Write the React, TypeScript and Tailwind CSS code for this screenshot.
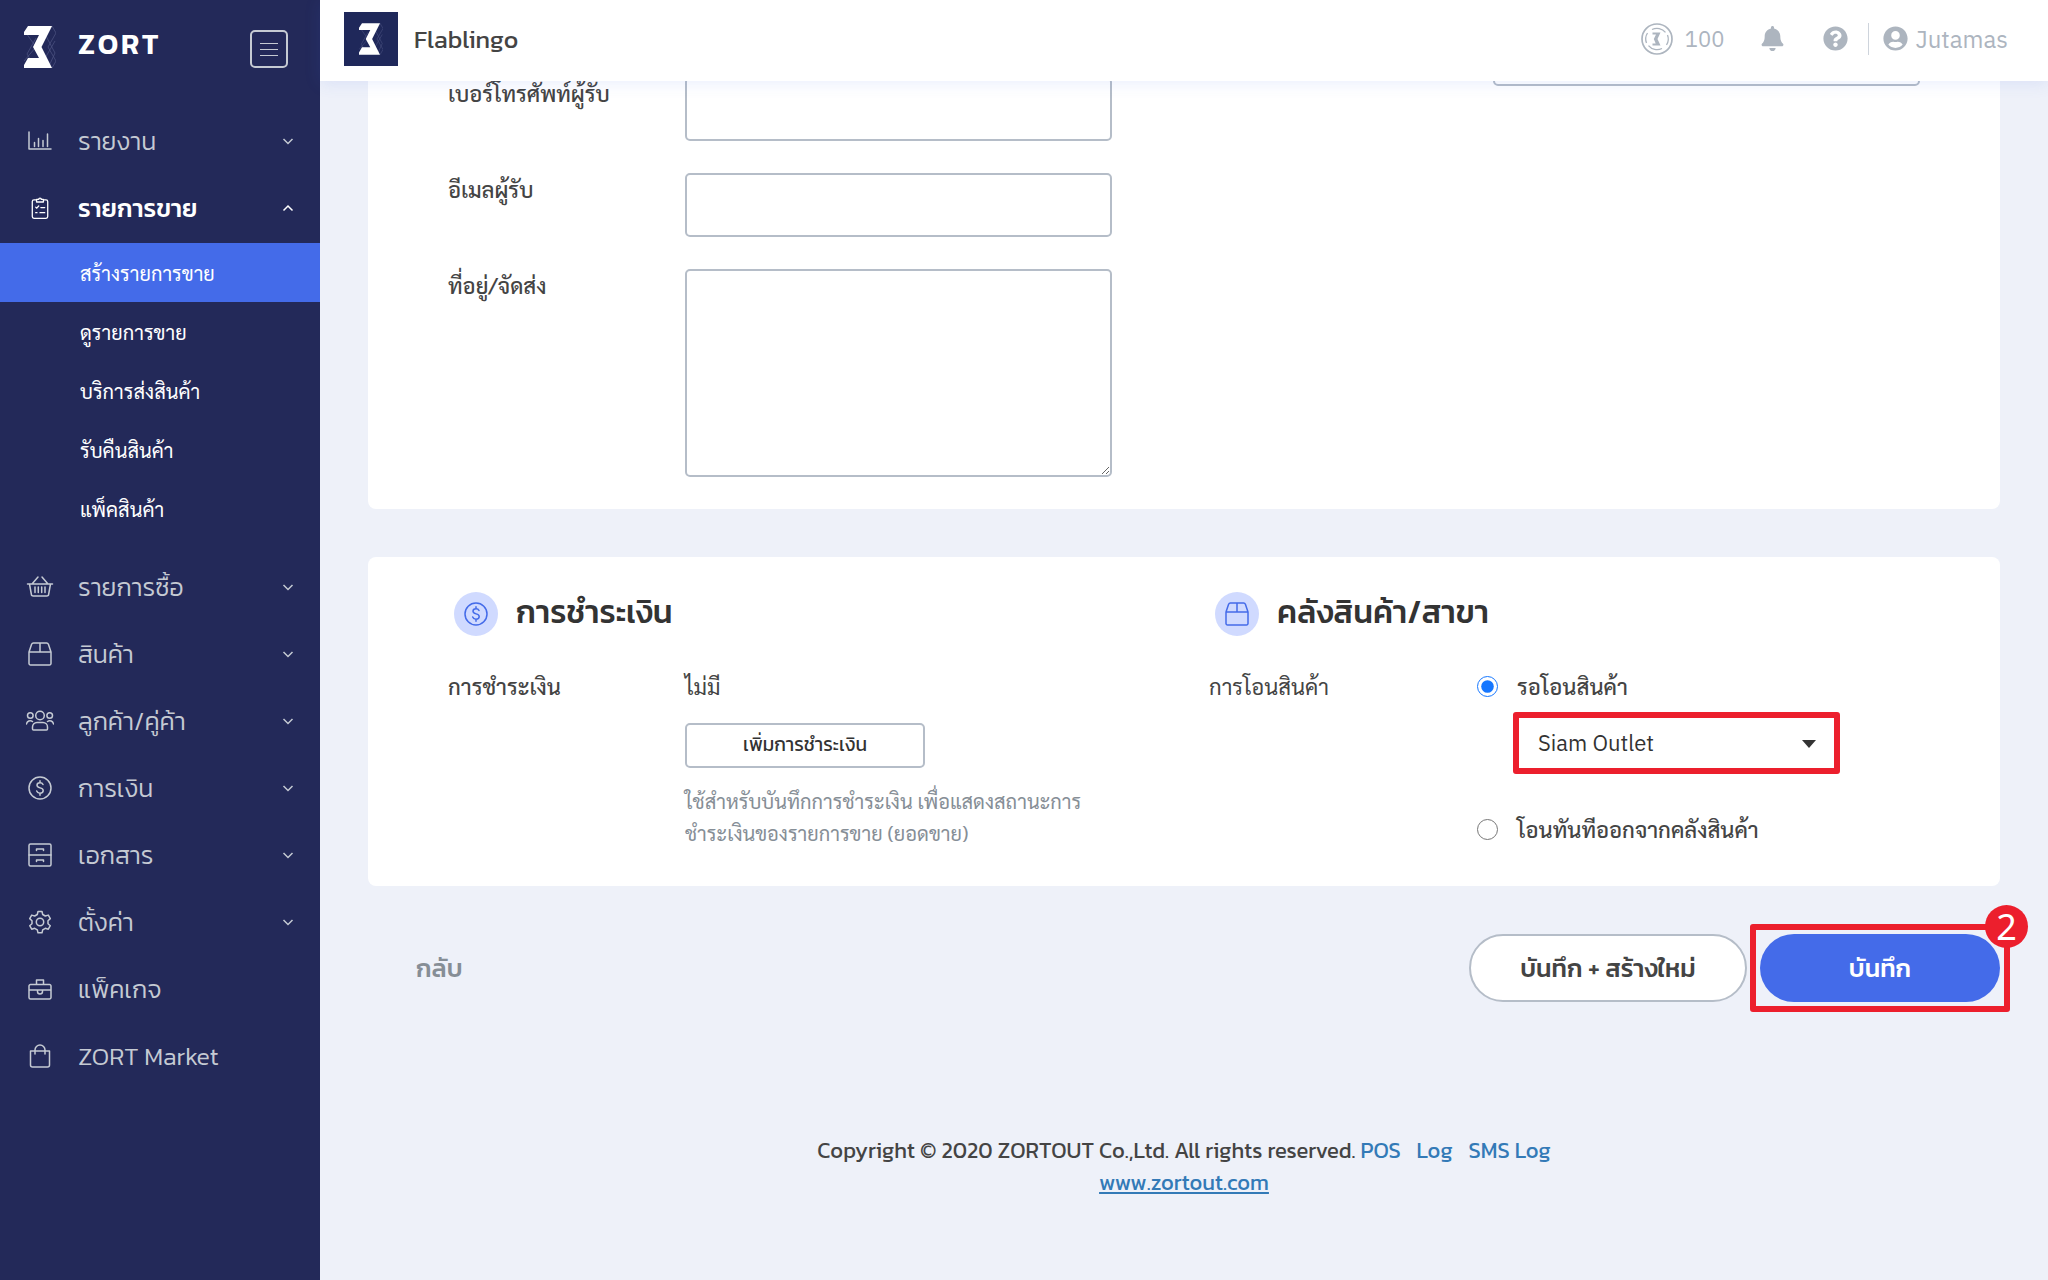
import React, { useState } from "react";
import { FaBell, FaQuestionCircle, FaUserCircle } from "react-icons/fa";
import { clsx, type ClassValue } from "clsx";
import { twMerge } from "tailwind-merge";

function cn(...inputs: ClassValue[]) {
  return twMerge(clsx(inputs));
}

const KANIT = "font-['Kanit','Noto_Sans_Thai',sans-serif]";
const PLEX = "font-['IBM_Plex_Sans','Noto_Sans',sans-serif]";

const FIELD = "block w-full rounded-[5px] border-2 border-[#b5bdc8] bg-white px-4 outline-none focus:border-[#446be9]";

type IconName =
  | "chart"
  | "clipboard"
  | "basket"
  | "box"
  | "people"
  | "coin"
  | "drawer"
  | "gear"
  | "briefcase"
  | "bag";

const ICONS: Record<IconName, React.ReactNode> = {
  chart: (
    <path d="M3 5v17h22M8.500 19.500v-4M12.500 19.500v-8M17 19.500v-6M21.500 19.500V7" />
  ),
  clipboard: (
    <>
      <path d="M10 4.500H7a2 2 0 0 0-2 2V24a2 2 0 0 0 2 2h14a2 2 0 0 0 2-2V6.500a2 2 0 0 0-2-2h-3" />
      <path d="M10 7V4h2.500a1.500 1.500 0 0 1 3 0H18v3zM9 13l1.200 1.200 2.300-2.500M15 13.500h4.500M9 19.500h1.500M14 19.500h5.500" />
    </>
  ),
  basket: (
    <path d="M1.500 11h25M3.500 11l1.800 10a2 2 0 0 0 2 2h13.400a2 2 0 0 0 2-2l1.800-10M12 4l-6 7M16 4l6 7M9 14v5.500M12.300 14v5.500M15.700 14v5.500M19 14v5.500" />
  ),
  box: (
    <path d="M3 12v11.500a1.500 1.500 0 0 0 1.500 1.500h19a1.500 1.500 0 0 0 1.500-1.500V12zM3 12l2.600-7.800A2 2 0 0 1 7.500 3h13a2 2 0 0 1 1.900 1.200L25 12M14 3v9" />
  ),
  people: (
    <>
      <circle cx="14" cy="8.500" r="4.300" />
      <circle cx="4.300" cy="8.500" r="2.800" />
      <circle cx="23.700" cy="8.500" r="2.800" />
      <path d="M6.500 22v-2a4.500 4.500 0 0 1 4.500-4.500h6a4.500 4.500 0 0 1 4.500 4.500v2a1 1 0 0 1-1 1h-13a1 1 0 0 1-1-1zM.5 17a3.800 3.800 0 0 1 6-2.500M27.500 17a3.800 3.800 0 0 0-6-2.500" />
    </>
  ),
  coin: (
    <>
      <circle cx="14" cy="14" r="11" />
      <path d="M17 10.500c-.5-1.200-1.500-1.800-3-1.800-1.800 0-3 .9-3 2.500 0 3.500 6.200 1.800 6.200 5.300 0 1.700-1.400 2.700-3.200 2.700-1.600 0-2.800-.8-3.300-2.200M14 6.800v1.900M14 19.200v2" />
    </>
  ),
  drawer: (
    <>
      <rect x="3" y="3" width="22" height="22" rx="1.500" />
      <path d="M3 14h22M10.500 9.500V8h7v1.500M10.500 20.500V19h7v1.500" />
    </>
  ),
  gear: (
    <>
      <circle cx="14" cy="14" r="3.700" />
      <path d="M12 3.500h4l.7 3 2.600 1.500 3-.9 2 3.500-2.300 2.100v3l2.300 2-2 3.500-3-.9-2.600 1.500-.7 3h-4l-.7-3-2.600-1.500-3 .9-2-3.500 2.300-2v-3l-2.300-2.100 2-3.500 3 .9 2.600-1.500z" />
    </>
  ),
  briefcase: (
    <path d="M4.500 9.500h19A1.500 1.500 0 0 1 25 11v11.500a1.500 1.500 0 0 1-1.500 1.500h-19A1.500 1.500 0 0 1 3 22.500V11a1.500 1.500 0 0 1 1.500-1.500zM10.500 9.500V5h7v4.500M3 15h8.500M16.500 15H25M11.500 15v1.500a2.500 2.500 0 0 0 5 0V15z" />
  ),
  bag: (
    <path d="M4.500 9h19v14a2 2 0 0 1-2 2h-15a2 2 0 0 1-2-2zM9 12V8a5 5 0 0 1 10 0v4" />
  ),
};

function Icon({ name, className }: { name: IconName; className?: string }) {
  return (
    <svg
      viewBox="0 0 28 28"
      className={cn("size-7 shrink-0", className)}
      fill="none"
      stroke="currentColor"
      strokeWidth="1.500"
      strokeLinecap="round"
      strokeLinejoin="round"
      aria-hidden="true"
    >
      {ICONS[name]}
    </svg>
  );
}

function Chevron({ up }: { up?: boolean }) {
  return (
    <svg viewBox="0 0 12 12" className="size-3" fill="none" stroke="currentColor" strokeWidth="1.500" aria-hidden="true">
      <path d={up ? "M1.500 8.500 6 4l4.500 4.500" : "M1.500 4 6 8.500 10.500 4"} />
    </svg>
  );
}

function Mark({ className }: { className?: string }) {
  return (
    <svg viewBox="0 0 32 42" className={className} aria-hidden="true">
      <g fill="none" stroke="#4a517f" strokeWidth=".8">
        <path d="M28 0l4 7-8 14 8 14-4 7M28 0 20 14M22 10l9 17-6 13M31 15 20 34M2 7l10 14L0 35M12 12l-9 16 5 8" />
      </g>
      <path d="M4 0h24L17.500 21 28 42H0v-3l4-7h11L9 21 15 9H0V6z" fill="#fff" />
    </svg>
  );
}

function PointsCoin() {
  return (
    <svg viewBox="0 0 32 32" className="size-8" fill="none" stroke="currentColor" aria-hidden="true">
      <circle cx="16" cy="16" r="15" strokeWidth="1.700" />
      <path d="M11 6.500a11 11 0 0 1 13.500 2.800M26.500 12a11 11 0 0 1-1 10M21 25.500a11 11 0 0 1-13.500-2.800M5.500 20a11 11 0 0 1 1-10" strokeWidth="1.300" />
      <path d="M11.500 9.500h8L16.500 16l3 6.500h-8v-2h3.200L12.800 16l2.200-4.500h-3.500z" fill="currentColor" stroke="none" />
    </svg>
  );
}

interface MenuItem {
  label: string;
  icon: IconName;
  arrow?: boolean;
  children?: string[];
}

const MENU: MenuItem[] = [
  { label: "รายงาน", icon: "chart", arrow: true },
  {
    label: "รายการขาย",
    icon: "clipboard",
    arrow: true,
    children: ["สร้างรายการขาย", "ดูรายการขาย", "บริการส่งสินค้า", "รับคืนสินค้า", "แพ็คสินค้า"],
  },
  { label: "รายการซื้อ", icon: "basket", arrow: true },
  { label: "สินค้า", icon: "box", arrow: true },
  { label: "ลูกค้า/คู่ค้า", icon: "people", arrow: true },
  { label: "การเงิน", icon: "coin", arrow: true },
  { label: "เอกสาร", icon: "drawer", arrow: true },
  { label: "ตั้งค่า", icon: "gear", arrow: true },
  { label: "แพ็คเกจ", icon: "briefcase" },
  { label: "ZORT Market", icon: "bag" },
];

function Sidebar() {
  return (
    <aside className="w-80 shrink-0 bg-[#232959] text-[#c5cad3]">
      <div className="flex h-[107px] items-start pt-[26px] pr-8 pl-6">
        <Mark className="h-[42px] w-8" />
        <span className={cn(KANIT, "ml-[22px] text-[29px] leading-9 font-semibold tracking-widest text-white")}>
          ZORT
        </span>
        <button type="button" aria-label="Menu" className="mt-1 ml-auto flex size-[38px] flex-col items-center justify-center gap-[5px] rounded-[5px] border-2 border-[#c5cad3]">
          <span className="h-px w-[18px] bg-current" />
          <span className="h-px w-[18px] bg-current" />
          <span className="h-px w-[18px] bg-current" />
        </button>
      </div>
      <nav>
        {MENU.map((item) => (
          <div key={item.label}>
            <button
              type="button"
              className={cn(
                KANIT,
                "flex h-[67px] w-full items-center pr-[26px] pl-[26px] text-left text-[25px] leading-8 font-light",
                item.children && "font-medium text-white"
              )}
            >
              <Icon name={item.icon} className={item.children && "size-6 mx-0.5"} />
              <span className="ml-6 grow">{item.label}</span>
              {item.arrow && <Chevron up={!!item.children} />}
            </button>
            {item.children && (
              <ul className="mt-0.5 mb-[15px]">
                {item.children.map((child, idx) => (
                  <li key={child}>
                    <a
                      href="#"
                      className={cn("flex h-[59px] items-center pl-20 text-[20px] leading-8 text-white", idx === 0 && "bg-[#446be9]")}
                    >
                      {child}
                    </a>
                  </li>
                ))}
              </ul>
            )}
          </div>
        ))}
      </nav>
    </aside>
  );
}

function TopBar() {
  return (
    <header className="relative z-10 flex h-[81px] items-center justify-between bg-white pr-10 pb-1 pl-6 shadow-[0_2px_16px_rgba(68,107,233,0.12)]">
      <div className="flex items-center gap-4">
        <span className="flex size-[54px] items-center justify-center bg-[#1f285a]">
          <Mark className="h-8 w-6" />
        </span>
        <span className={cn(KANIT, "text-[25px] leading-8 text-[#444]")}>Flablingo</span>
      </div>
      <div className={cn(PLEX, "flex h-8 items-center text-[24px] leading-8 text-[#adb5bf]")}>
        <PointsCoin />
        <span className="ml-3 text-[22px]">100</span>
        <button type="button" aria-label="Notifications" className="ml-9">
          <FaBell size={25} />
        </button>
        <button type="button" aria-label="Help" className="ml-[38px]">
          <FaQuestionCircle size={25} />
        </button>
        <span className="mr-[14px] ml-5 h-8 w-px bg-[#ced4dc]" />
        <button type="button" className="flex items-center gap-[7px]">
          <FaUserCircle size={25} />
          Jutamas
        </button>
      </div>
    </header>
  );
}

function SectionTitle({ icon, children }: { icon: IconName; children: React.ReactNode }) {
  return (
    <h2 className={cn(KANIT, "mb-[34px] ml-1.5 flex h-11 items-center gap-[18px] text-[32px] leading-10 font-medium text-[#333]")}>
      <span className="flex size-11 items-center justify-center rounded-full bg-[#d0daff] text-[#446be9]">
        <Icon name={icon} />
      </span>
      <span className="pb-1">{children}</span>
    </h2>
  );
}

function RecipientCard() {
  return (
    <section className="-mt-20 grid grid-cols-2 gap-x-[50px] rounded-lg bg-white px-20 pt-[21px] pb-8">
      <div className="flex flex-col gap-8 pt-[55px]">
        <div className="grid grid-cols-[5fr_9fr_1fr]">
          <label htmlFor="phone" className="font-medium">เบอร์โทรศัพท์ผู้รับ</label>
          <input id="phone" type="tel" className={cn(FIELD, "h-16")} />
        </div>
        <div className="grid grid-cols-[5fr_9fr_1fr]">
          <label htmlFor="email" className="font-medium">อีเมลผู้รับ</label>
          <input id="email" type="email" className={cn(FIELD, "h-16")} />
        </div>
        <div className="grid grid-cols-[5fr_9fr_1fr]">
          <label htmlFor="address" className="font-medium">ที่อยู่/จัดส่ง</label>
          <textarea id="address" className={cn(FIELD, "h-52")} />
        </div>
      </div>
      <div className="grid grid-cols-[2fr_3fr] items-start">
        <input aria-label="Note" className={cn(FIELD, "col-start-2 h-16")} />
      </div>
    </section>
  );
}

function PaymentCard() {
  const [transfer, setTransfer] = useState("wait");

  return (
    <section className="mt-12 grid grid-cols-2 gap-x-[50px] rounded-lg bg-white px-20 pt-[35px] pb-[37px]">
      <div>
        <SectionTitle icon="coin">การชำระเงิน</SectionTitle>
        <div className="grid grid-cols-[5fr_9fr_1fr]">
          <span className="font-medium">การชำระเงิน</span>
          <div>
            <p>ไม่มี</p>
            <button
              type="button"
              className={cn(KANIT, "mt-[21px] h-[45px] w-60 rounded-[5px] border-2 border-[#b5bdc8] bg-white pb-0.5 text-[19px] leading-8 text-[#333]")}
            >
              เพิ่มการชำระเงิน
            </button>
            <p className="mt-[17px] text-[20px] text-[#868e96]">
              ใช้สำหรับบันทึกการชำระเงิน เพื่อแสดงสถานะการ
              <br />
              ชำระเงินของรายการขาย (ยอดขาย)
            </p>
          </div>
        </div>
      </div>
      <div>
        <SectionTitle icon="box">คลังสินค้า/สาขา</SectionTitle>
        <div className="flex">
          <span className="w-[268px]">การโอนสินค้า</span>
          <div>
            <label className="flex items-center gap-[19px] font-medium">
              <input
                type="radio"
                name="transfer"
                checked={transfer === "wait"}
                onChange={() => setTransfer("wait")}
                className="size-[21px] accent-[#1677ff]"
              />
              รอโอนสินค้า
            </label>
            <div className="relative mt-2.5 ml-9 w-[327px] rounded-[3px] border-[6px] border-[#ec1f2d]">
              <select
                aria-label="คลังสินค้า"
                className={cn(PLEX, "block h-[50px] w-full appearance-none bg-white pr-12 pl-[19px] text-[22px] leading-8 text-[#333] outline-none")}
              >
                <option>Siam Outlet</option>
              </select>
              <svg viewBox="0 0 14 8" className="pointer-events-none absolute top-[22px] right-[18px] h-2 w-3.5" fill="#333" aria-hidden="true">
                <path d="M0 0h14L7 8z" />
              </svg>
            </div>
            <label className="mt-[39px] flex items-center gap-[19px] font-medium">
              <input
                type="radio"
                name="transfer"
                checked={transfer === "now"}
                onChange={() => setTransfer("now")}
                className="size-[21px] accent-[#1677ff]"
              />
              โอนทันทีออกจากคลังสินค้า
            </label>
          </div>
        </div>
      </div>
    </section>
  );
}

function Actions() {
  return (
    <div className={cn(KANIT, "mt-12 flex h-17 items-center gap-[13px] text-[25px] leading-9 font-medium")}>
      <button type="button" className="mr-auto ml-12 text-[#868e96]">กลับ</button>
      <button type="button" className="h-17 w-[278px] rounded-full border-2 border-[#b5bdc8] bg-white text-[#444]">
        บันทึก + สร้างใหม่
      </button>
      <div className="relative">
        <button type="button" className="block h-17 w-60 rounded-full bg-[#446be9] text-white">
          บันทึก
        </button>
        <span className="pointer-events-none absolute -inset-[10px] rounded-[3px] border-[6px] border-[#ec1f2d]" />
        <span className="absolute -top-[29px] -right-7 flex size-[43px] items-center justify-center rounded-full bg-[#ec1f2d] font-['Noto_Sans',sans-serif] text-[36px] leading-10 font-normal text-white">
          2
        </span>
      </div>
    </div>
  );
}

function Footer() {
  return (
    <footer className={cn(KANIT, "mt-[133px] pb-10 text-center text-[22px] leading-8 text-[#444]")}>
      <p>
        Copyright © 2020 ZORTOUT Co.,Ltd. All rights reserved.{" "}
        <a href="#" className="text-[#337ab7]">POS</a>
        <a href="#" className="ml-4 text-[#337ab7]">Log</a>
        <a href="#" className="ml-4 text-[#337ab7]">SMS Log</a>
      </p>
      <a href="#" className="text-[#337ab7] underline">www.zortout.com</a>
    </footer>
  );
}

export default function App() {
  return (
    <div className="flex min-h-screen bg-[#eef1f9] font-['Sarabun','Noto_Sans_Thai_Looped',sans-serif] text-[22px] leading-8 text-[#444]">
      <Sidebar />
      <div className="min-w-0 grow">
        <TopBar />
        <main className="px-12">
          <RecipientCard />
          <PaymentCard />
          <Actions />
        </main>
        <Footer />
      </div>
    </div>
  );
}
